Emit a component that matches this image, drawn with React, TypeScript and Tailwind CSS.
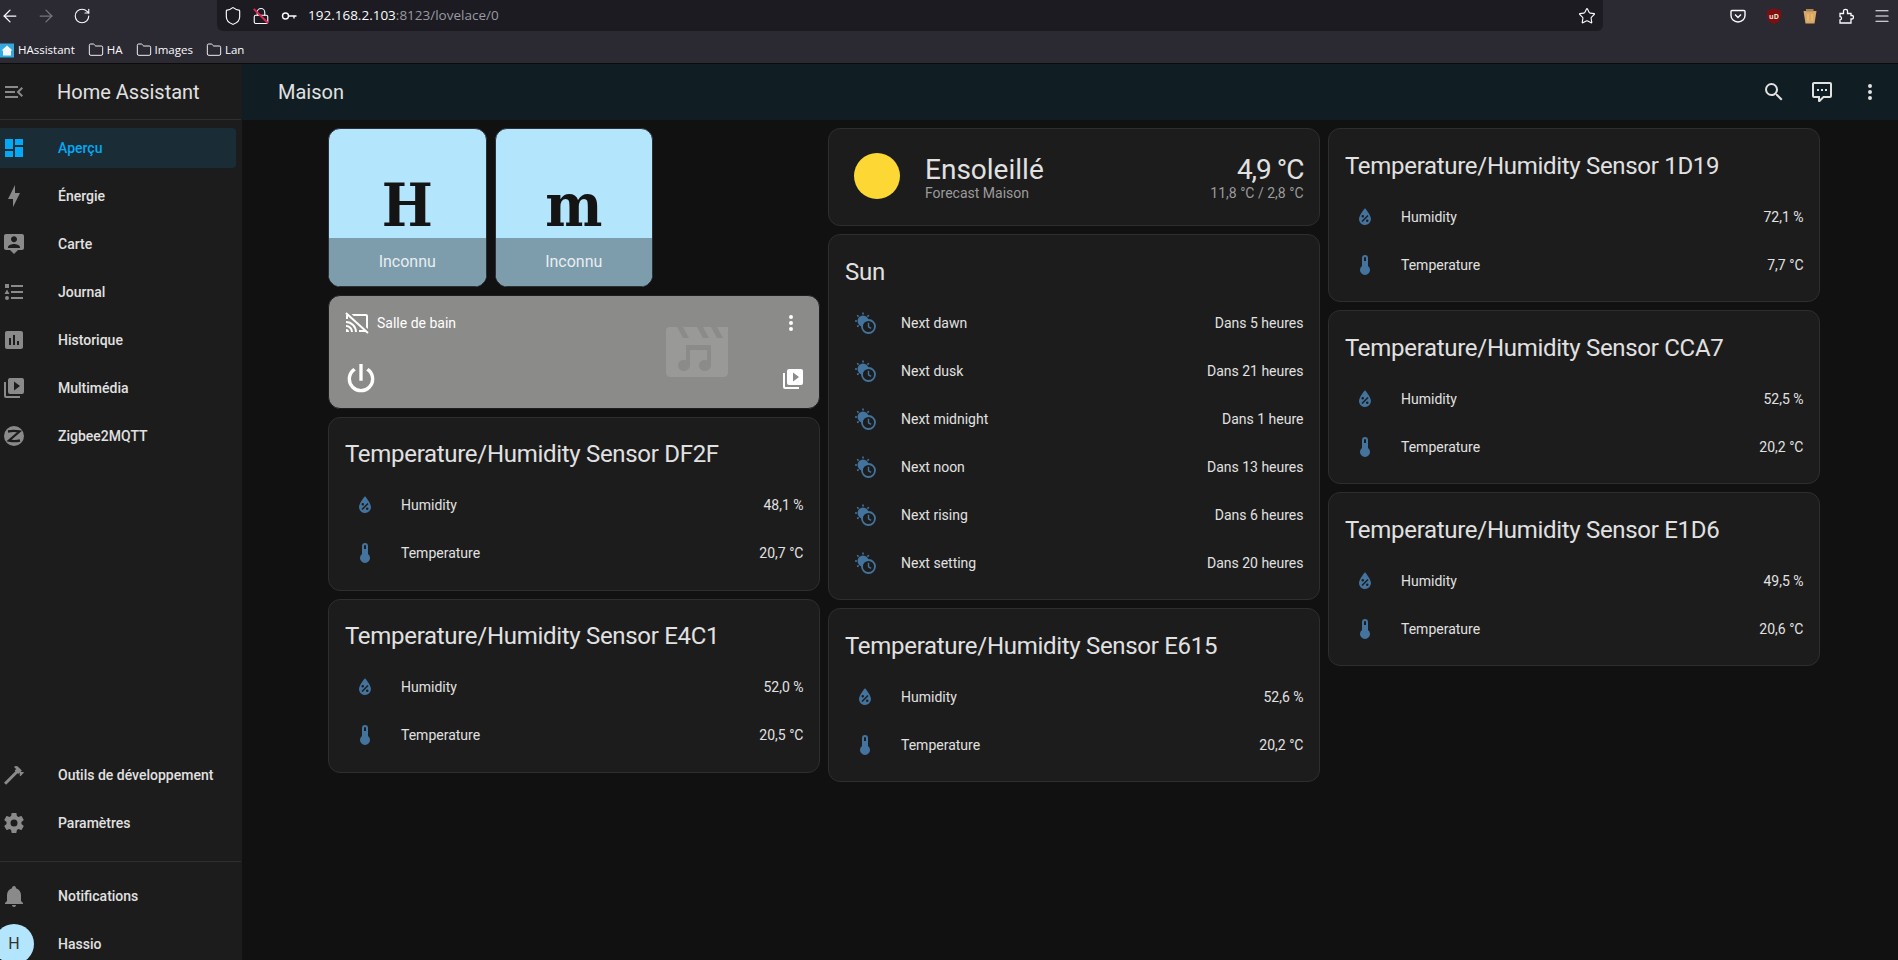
import { ArrowLeft, ArrowRight, Folder, Lock, Menu, RotateCw, Shield, Star } from 'lucide-react'

const paths = {
  dashboard: 'M13,3V9H21V3M13,21H21V11H13M3,21H11V15H3M3,13H11V3H3V13Z',
  bolt: 'M11 15H6L13 1V9H18L11 23V15Z',
  map: 'M20 2H4C2.9 2 2 2.9 2 4V16C2 17.1 2.9 18 4 18H8L12 22L16 18H20C21.1 18 22 17.1 22 16V4C22 2.9 21.1 2 20 2M12 4.3C13.66 4.3 15 5.64 15 7.3S13.66 10.3 12 10.3 9 8.96 9 7.3 10.34 4.3 12 4.3M18 16H6V15C6 13 10 11.9 12 11.9S18 13 18 15V16Z',
  logbook: 'M5,9.5L7.5,14H2.5L5,9.5M3,4H7V8H3V4M5,20A2,2 0 0,0 7,18A2,2 0 0,0 5,16A2,2 0 0,0 3,18A2,2 0 0,0 5,20M9,5V7H21V5H9M9,19H21V17H9V19M9,13H21V11H9V13Z',
  chart: 'M19 3H5C3.9 3 3 3.9 3 5V19C3 20.1 3.9 21 5 21H19C20.1 21 21 20.1 21 19V5C21 3.9 20.1 3 19 3M9 17H7V10H9V17M13 17H11V7H13V17M17 17H15V13H17V17Z',
  media: 'M4,6H2V20A2,2 0 0,0 4,22H18V20H4V6M20,2H8A2,2 0 0,0 6,4V16A2,2 0 0,0 8,18H20A2,2 0 0,0 22,16V4A2,2 0 0,0 20,2M12,14.5V5.5L18,10L12,14.5Z',
  hammer: 'M2 19.63L13.43 8.2L12.72 7.5L14.14 6.07L12 3.89C13.2 2.7 15.09 2.7 16.27 3.89L19.87 7.5L18.45 8.91H21.29L22 9.62L18.45 13.21L17.74 12.5V9.62L16.27 11.04L15.56 10.33L4.13 21.76L2 19.63Z',
  cog: 'M12,15.5A3.5,3.5 0 0,1 8.5,12A3.5,3.5 0 0,1 12,8.5A3.5,3.5 0 0,1 15.5,12A3.5,3.5 0 0,1 12,15.5M19.43,12.97C19.47,12.65 19.5,12.33 19.5,12C19.5,11.67 19.47,11.34 19.43,11L21.54,9.37C21.73,9.22 21.78,8.95 21.66,8.73L19.66,5.27C19.54,5.05 19.27,4.96 19.05,5.05L16.56,6.05C16.04,5.66 15.5,5.32 14.87,5.07L14.5,2.42C14.46,2.18 14.25,2 14,2H10C9.75,2 9.54,2.18 9.5,2.42L9.13,5.07C8.5,5.32 7.96,5.66 7.44,6.05L4.95,5.05C4.73,4.96 4.46,5.05 4.34,5.27L2.34,8.73C2.21,8.95 2.27,9.22 2.46,9.37L4.57,11C4.53,11.34 4.5,11.67 4.5,12C4.5,12.33 4.53,12.65 4.57,12.97L2.46,14.63C2.27,14.78 2.21,15.05 2.34,15.27L4.34,18.73C4.46,18.95 4.73,19.03 4.95,18.95L7.44,17.94C7.96,18.34 8.5,18.68 9.13,18.93L9.5,21.58C9.54,21.82 9.75,22 10,22H14C14.25,22 14.46,21.82 14.5,21.58L14.87,18.93C15.5,18.67 16.04,18.34 16.56,17.94L19.05,18.95C19.27,19.03 19.54,18.95 19.66,18.73L21.66,15.27C21.78,15.05 21.73,14.78 21.54,14.63L19.43,12.97Z',
  bell: 'M21,19V20H3V19L5,17V11C5,7.9 7.03,5.17 10,4.29C10,4.19 10,4.1 10,4A2,2 0 0,1 12,2A2,2 0 0,1 14,4C14,4.1 14,4.19 14,4.29C16.97,5.17 19,7.9 19,11V17L21,19M14,21A2,2 0 0,1 12,23A2,2 0 0,1 10,21',
  menuOpen: 'M21,15.61L19.59,17L14.58,12L19.59,7L21,8.39L17.44,12L21,15.61M3,6H16V8H3V6M3,13V11H13V13H3M3,18V16H16V18H3Z',
  search: 'M9.5,3A6.5,6.5 0 0,1 16,9.5C16,11.11 15.41,12.59 14.44,13.73L14.71,14H15.5L20.5,19L19,20.5L14,15.5V14.71L13.73,14.44C12.59,15.41 11.11,16 9.5,16A6.5,6.5 0 0,1 3,9.5A6.5,6.5 0 0,1 9.5,3M9.5,5C7,5 5,7 5,9.5C5,12 7,14 9.5,14C12,14 14,12 14,9.5C14,7 12,5 9.5,5Z',
  comment: 'M9,22A1,1 0 0,1 8,21V18H4A2,2 0 0,1 2,16V4C2,2.89 2.9,2 4,2H20A2,2 0 0,1 22,4V16A2,2 0 0,1 20,18H13.9L10.2,21.71C10,21.9 9.75,22 9.5,22V22H9M10,16V19.08L13.08,16H20V4H4V16H10M17,11H15V9H17V11M13,11H11V9H13V11M9,11H7V9H9V11Z',
  dots: 'M12,16A2,2 0 0,1 14,18A2,2 0 0,1 12,20A2,2 0 0,1 10,18A2,2 0 0,1 12,16M12,10A2,2 0 0,1 14,12A2,2 0 0,1 12,14A2,2 0 0,1 10,12A2,2 0 0,1 12,10M12,4A2,2 0 0,1 14,6A2,2 0 0,1 12,8A2,2 0 0,1 10,6A2,2 0 0,1 12,4Z',
  humidity: 'M12,3.25C12,3.25 6,10 6,14C6,17.32 8.69,20 12,20A6,6 0 0,0 18,14C18,10 12,3.25 12,3.25M14.47,9.97L15.53,11.03L9.53,17.03L8.47,15.97M9.75,10A1.25,1.25 0 0,1 11,11.25A1.25,1.25 0 0,1 9.75,12.5A1.25,1.25 0 0,1 8.5,11.25A1.25,1.25 0 0,1 9.75,10M14.25,14.5A1.25,1.25 0 0,1 15.5,15.75A1.25,1.25 0 0,1 14.25,17A1.25,1.25 0 0,1 13,15.75A1.25,1.25 0 0,1 14.25,14.5Z',
  thermometer: 'M15 13V5A3 3 0 0 0 9 5V13A5 5 0 1 0 15 13M12 4A1 1 0 0 1 13 5V8H11V5A1 1 0 0 1 12 4Z',
  castOff: 'M1.6,1.27L0.25,2.75L1.41,3.8C1.16,4.13 1,4.55 1,5V8H3V5.23L18.2,19H14V21H20.41L22.31,22.72L23.65,21.24M6.5,3L8.7,5H21V16.14L23,17.95V5C23,3.89 22.1,3 21,3M1,10V12A9,9 0 0,1 10,21H12C12,14.92 7.08,10 1,10M1,14V16A5,5 0 0,1 6,21H8A7,7 0 0,0 1,14M1,18V21H4A3,3 0 0,0 1,18Z',
  power: 'M16.56,5.44L15.11,6.89C16.84,7.94 18,9.83 18,12A6,6 0 0,1 12,18A6,6 0 0,1 6,12C6,9.83 7.16,7.94 8.88,6.88L7.44,5.44C5.36,6.88 4,9.28 4,12A8,8 0 0,0 12,20A8,8 0 0,0 20,12C20,9.28 18.64,6.88 16.56,5.44M13,3H11V13H13',
}

function Mdi({ d, className }: { d: string; className?: string }) {
  return (
    <svg viewBox="0 0 24 24" fill="currentColor" fillRule="evenodd" className={className}>
      <path d={d} />
    </svg>
  )
}

function ZigbeeIcon() {
  return (
    <svg viewBox="0 0 24 24" className="h-6 w-6 shrink-0">
      <circle cx="12" cy="12" r="10" fill="#8a8a8a" />
      <path d="M6 7.5C9.5 6.8 14 6.8 17.5 7.5L7 16.5C10.5 17.2 14.5 17.2 18 16.5" fill="none" stroke="#1c1c1c" strokeWidth="2.3" />
    </svg>
  )
}

function SunClockIcon() {
  return (
    <svg viewBox="0 0 24 24" className="h-6 w-6 shrink-0 text-[#44739e]">
      <circle cx="10" cy="10" r="5.5" fill="currentColor" />
      <path d="M10 1.5v2M2 10h2M4.2 4.2l1.4 1.4M15.8 4.2l-1.4 1.4M4.2 15.8l1.4-1.4" stroke="currentColor" strokeWidth="1.6" />
      <circle cx="15.5" cy="15.5" r="6.5" fill="#1c1c1c" stroke="currentColor" strokeWidth="1.8" />
      <path d="M15.5 11.8v4l2.6 1.6" fill="none" stroke="currentColor" strokeWidth="1.4" />
    </svg>
  )
}

function MediaPlaceholder() {
  return (
    <svg viewBox="0 0 62 50" className="h-[50px] w-[62px] text-[#999998]">
      <path
        fill="currentColor"
        fillRule="evenodd"
        d="M3 0H11L17 11H23L17 0H31L37 11H43L37 0H45L51 11H57L51 0H62V46C62 48 60 50 58 50H4C2 50 0 48 0 46V3C0 1.5 1.5 0 3 0Z"
      />
      <path
        fill="#8b8b89"
        d="M20 18H45V38C45 41.5 42 44 39 44C35.5 44 33 41.5 33 38.5C33 35 35.5 33 39 33C39.7 33 40.4 33.1 41 33.4V23H24V38C24 41.5 21 44 18 44C14.5 44 12 41.5 12 38.5C12 35 14.5 33 18 33C18.7 33 19.4 33.1 20 33.4Z"
      />
    </svg>
  )
}

const topNav = [
  { name: 'Aperçu', icon: paths.dashboard, active: true },
  { name: 'Énergie', icon: paths.bolt },
  { name: 'Carte', icon: paths.map },
  { name: 'Journal', icon: paths.logbook },
  { name: 'Historique', icon: paths.chart },
  { name: 'Multimédia', icon: paths.media },
  { name: 'Zigbee2MQTT', icon: '' },
]

function NavRow({ name, icon, active }: { name: string; icon: string; active?: boolean }) {
  return (
    <div
      className={`flex h-10 w-[236px] items-center gap-8 rounded-r pl-[2px] text-sm font-medium ${
        active ? 'bg-[#1a2c36] text-[#03a9f4]' : 'text-[#e1e1e1]'
      }`}
    >
      {icon ? <Mdi d={icon} className={`h-6 w-6 shrink-0 ${active ? '' : 'text-[#8a8a8a]'}`} /> : <ZigbeeIcon />}
      <span>{name}</span>
    </div>
  )
}

function Sidebar() {
  return (
    <aside className="flex h-full w-[242px] shrink-0 flex-col overflow-hidden border-r border-[#1c1c1c] bg-[#1c1c1c]">
      <div className="flex h-14 shrink-0 items-center gap-[31px] border-b border-[#2f2f2f] pl-[2px] text-[#e1e1e1]">
        <Mdi d={paths.menuOpen} className="h-6 w-6 shrink-0 text-[#8a8a8a]" />
        <span className="text-xl">Home Assistant</span>
      </div>
      <nav className="flex flex-col gap-2 pt-2">
        {topNav.map((item) => (
          <NavRow key={item.name} {...item} />
        ))}
      </nav>
      <div className="mt-auto flex flex-col gap-2 pb-[18px]">
        <NavRow name="Outils de développement" icon={paths.hammer} />
        <NavRow name="Paramètres" icon={paths.cog} />
      </div>
      <div className="h-[99px] shrink-0 overflow-hidden border-t border-[#2f2f2f] pt-[14px]">
        <NavRow name="Notifications" icon={paths.bell} />
        <div className="mt-2 flex h-10 items-center gap-6 text-sm font-medium text-[#e1e1e1]">
          <div className="-ml-[6px] flex h-10 w-10 shrink-0 items-center justify-center rounded-full bg-[#b3e5fc] text-base font-normal text-[#333]">
            H
          </div>
          <span>Hassio</span>
        </div>
      </div>
    </aside>
  )
}

function CardShell({ children }: { children: React.ReactNode }) {
  return <div className="rounded-xl border border-[#2e2e2e] bg-[#1c1c1c] text-[#e1e1e1]">{children}</div>
}

type Row = { label: string; value: string; icon?: 'humidity' | 'thermometer' }

// tight: first column sits 1px lower in the shot, content stays where it was
function EntitiesCard({ title, rows, tight }: { title: string; rows: Row[]; tight?: boolean }) {
  return (
    <CardShell>
      <div className={`mb-[9px] px-4 text-2xl leading-[44px] tracking-[-0.3px] ${tight ? 'pt-[14px]' : 'pt-[15px]'}`}>
        {title}
      </div>
      <div className={`flex flex-col gap-2 ${tight ? 'pb-[17px]' : 'pb-4'}`}>
        {rows.map((row) => (
          <div key={row.label} className="flex h-10 items-center pl-6 pr-[15px] text-sm">
            {row.icon ? <Mdi d={paths[row.icon]} className="h-6 w-6 shrink-0 text-[#44739e]" /> : <SunClockIcon />}
            <span className="ml-6 flex-1">{row.label}</span>
            <span>{row.value}</span>
          </div>
        ))}
      </div>
    </CardShell>
  )
}

function SensorCard({ id, humidity, temperature, tight }: { id: string; humidity: string; temperature: string; tight?: boolean }) {
  return (
    <EntitiesCard
      title={`Temperature/Humidity Sensor ${id}`}
      tight={tight}
      rows={[
        { label: 'Humidity', value: humidity, icon: 'humidity' },
        { label: 'Temperature', value: temperature, icon: 'thermometer' },
      ]}
    />
  )
}

function PersonTile({ letter }: { letter: string }) {
  return (
    <div className="flex h-[159px] w-[158.5px] flex-col overflow-hidden rounded-xl border border-[#2a3034] bg-[#b3e5fc]">
      <div className="flex h-[109px] items-end justify-center font-['DejaVu_Serif',serif] text-[60px] font-bold leading-[66px] text-[#141414]">
        <span className="scale-x-90">{letter}</span>
      </div>
      <div className="flex flex-1 items-center justify-center bg-[#7d9cac] text-base text-[#e8eef1]">Inconnu</div>
    </div>
  )
}

function MediaCard() {
  return (
    <div className="relative flex h-[114px] flex-col justify-between overflow-hidden rounded-xl border border-[#1e1e1e] bg-[#8b8b89] text-white">
      <div className="absolute left-[337px] top-[31px]">
        <MediaPlaceholder />
      </div>
      <div className="relative flex items-center px-4 pt-[15px]">
        <Mdi d={paths.castOff} className="h-6 w-6 shrink-0" />
        <span className="ml-2 flex-1 text-sm">Salle de bain</span>
        <Mdi d={paths.dots} className="h-6 w-6" />
      </div>
      <div className="relative flex items-center justify-between pb-[9px] pl-[12px] pr-[14px]">
        <Mdi d={paths.power} className="h-10 w-10" />
        <Mdi d={paths.media} className="h-6 w-6" />
      </div>
    </div>
  )
}

function WeatherCard() {
  return (
    <CardShell>
      <div className="flex h-[96px] items-start pl-[25px] pr-[15px] pt-[26px]">
        <div className="-mt-[2px] h-[46px] w-[46px] shrink-0 rounded-full bg-[#fdd835]" />
        <div className="ml-[25px] flex-1">
          <div className="text-[28px] leading-[30px]">Ensoleillé</div>
          <div className="text-sm leading-4 text-[#9b9b9b]">Forecast Maison</div>
        </div>
        <div className="text-right">
          <div className="text-[28px] leading-[30px] tracking-[-1px]">4,9 °C</div>
          <div className="text-sm leading-4 text-[#9b9b9b]">11,8 °C / 2,8 °C</div>
        </div>
      </div>
    </CardShell>
  )
}

function BrowserChrome() {
  return (
    <div className="h-16 shrink-0 border-b border-[#0c0c0d] bg-[#2b2a33] font-['Open_Sans',sans-serif] text-[#fbfbfe]">
      <div className="flex h-[31px] items-center">
        <div className="flex w-[217px] shrink-0 items-center">
          <ArrowLeft size={20} strokeWidth={1.5} />
          <ArrowRight size={20} strokeWidth={1.5} className="ml-4 text-[#77767c]" />
          <RotateCw size={18} strokeWidth={1.5} className="ml-[17px]" />
        </div>
        <div className="flex h-[31px] w-[1386px] shrink-0 items-center rounded-b-md bg-[#1c1b22] pl-[6px] pr-[7px]">
          <Shield size={20} strokeWidth={1.4} />
          <span className="relative ml-[9px] h-[18px] w-[18px]">
            <Lock size={18} strokeWidth={1.5} />
            <span className="absolute left-[-1px] top-[8px] h-[1.5px] w-[20px] rotate-45 bg-[#e22850]" />
          </span>
          <svg viewBox="0 0 16 16" fill="none" stroke="currentColor" strokeWidth="1.4" className="ml-[11px] h-4 w-4">
            <circle cx="4.5" cy="8" r="3" />
            <path d="M7.5 8H15.5M13 8V10.5" />
          </svg>
          <span className="ml-[11px] flex-1 text-[13.5px]">
            192.168.2.103<span className="text-[#9a9aa0]">:8123/lovelace/0</span>
          </span>
          <Star size={18} strokeWidth={1.5} />
        </div>
        <div className="flex flex-1 items-center pl-[127px]">
          <svg viewBox="0 0 16 16" fill="none" stroke="currentColor" strokeWidth="1.4" className="h-4 w-4">
            <path d="M2 2.5H14C14.5 2.5 15 3 15 3.5V7.5C15 11 12 14 8 14S1 11 1 7.5V3.5C1 3 1.5 2.5 2 2.5Z" />
            <path d="M5 6.5L8 9.5L11 6.5" />
          </svg>
          <svg viewBox="0 0 16 16" className="ml-[20px] h-4 w-4">
            <path d="M8 0.5L15 2.5V8C15 12 11 15 8 16C5 15 1 12 1 8V2.5Z" fill="#800e0e" />
            <text x="8" y="10.5" textAnchor="middle" fontSize="7" fontWeight="700" fill="#f2e6d8">uD</text>
          </svg>
          <svg viewBox="0 0 16 16" className="ml-[20px] h-4 w-4">
            <path d="M1.5 3H14.5L12.5 15.5H3.5Z" fill="#d9a76a" />
            <path d="M4 1H11.5V3.5H4Z" fill="#a88552" />
            <path d="M6 6V13M10 6V13" stroke="#ecbe68" strokeWidth="1.5" />
          </svg>
          <svg viewBox="0 0 16 16" fill="none" stroke="currentColor" strokeWidth="1.3" className="ml-[20px] h-4 w-4">
            <path d="M2 5.5H5.5V3C5.5 0.8 9.5 0.8 9.5 3V5.5H13V7.5H14C16 7.5 16 11 14 11H13V15H2V12C4 12 4 8.5 2 8.5Z" />
          </svg>
          <Menu size={18} strokeWidth={1.6} className="ml-[19px]" />
        </div>
      </div>
      <div className="flex h-8 items-center pt-[6px] text-[11.5px]">
        <svg viewBox="0 0 14 14" className="h-[15px] w-[14px]">
          <rect width="14" height="14" fill="#35a8e0" />
          <path d="M7 2L12.5 7H11V12H3V7H1.5Z" fill="#f2f8fc" />
        </svg>
        <span className="ml-1">HAssistant</span>
        <Folder size={16} strokeWidth={1.4} className="ml-[13px]" />
        <span className="ml-[3px]">HA</span>
        <Folder size={16} strokeWidth={1.4} className="ml-[13px]" />
        <span className="ml-[3px]">Images</span>
        <Folder size={16} strokeWidth={1.4} className="ml-[13px]" />
        <span className="ml-[3px]">Lan</span>
      </div>
    </div>
  )
}

export default function App() {
  return (
    <div className="flex h-[960px] flex-col overflow-hidden bg-[#111111] font-['Roboto',sans-serif]">
      <BrowserChrome />
      <div className="flex min-h-0 flex-1">
        <Sidebar />
        <main className="min-w-0 flex-1">
          <header className="flex h-14 items-center bg-[#101e24] pl-[36px] pr-4 text-[#e1e1e1]">
            <span className="flex-1 text-xl">Maison</span>
            <div className="flex items-center gap-6">
              <Mdi d={paths.search} className="h-6 w-6" />
              <Mdi d={paths.comment} className="h-6 w-6" />
              <Mdi d={paths.dots} className="h-6 w-6" />
            </div>
          </header>
          <div className="grid w-[1577.5px] grid-cols-3 gap-x-[8.5px] pl-[86px] pt-2">
            <div className="flex flex-col gap-2">
              <div className="flex gap-2">
                <PersonTile letter="H" />
                <PersonTile letter="m" />
              </div>
              <MediaCard />
              <SensorCard tight id="DF2F" humidity="48,1 %" temperature="20,7 °C" />
              <SensorCard tight id="E4C1" humidity="52,0 %" temperature="20,5 °C" />
            </div>
            <div className="flex flex-col gap-2">
              <WeatherCard />
              <EntitiesCard
                title="Sun"
                rows={[
                  { label: 'Next dawn', value: 'Dans 5 heures' },
                  { label: 'Next dusk', value: 'Dans 21 heures' },
                  { label: 'Next midnight', value: 'Dans 1 heure' },
                  { label: 'Next noon', value: 'Dans 13 heures' },
                  { label: 'Next rising', value: 'Dans 6 heures' },
                  { label: 'Next setting', value: 'Dans 20 heures' },
                ]}
              />
              <SensorCard id="E615" humidity="52,6 %" temperature="20,2 °C" />
            </div>
            <div className="flex flex-col gap-2">
              <SensorCard id="1D19" humidity="72,1 %" temperature="7,7 °C" />
              <SensorCard id="CCA7" humidity="52,5 %" temperature="20,2 °C" />
              <SensorCard id="E1D6" humidity="49,5 %" temperature="20,6 °C" />
            </div>
          </div>
        </main>
      </div>
    </div>
  )
}
